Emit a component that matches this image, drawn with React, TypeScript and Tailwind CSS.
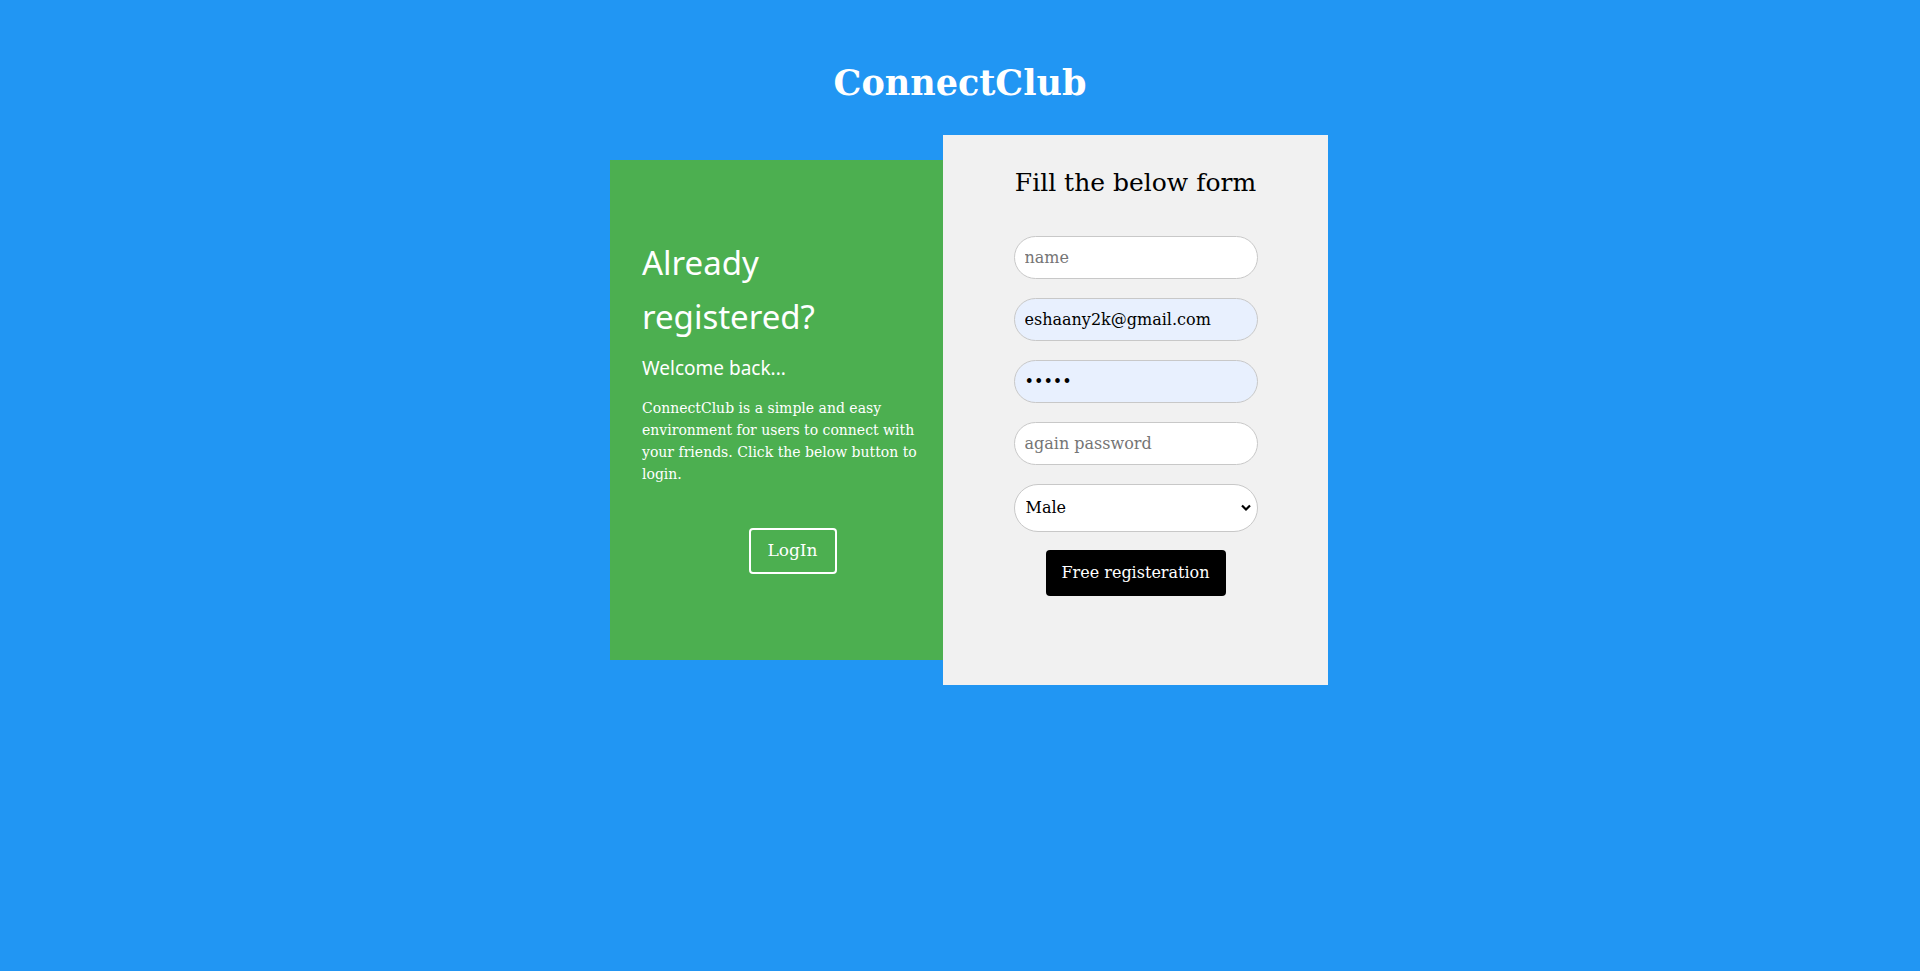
import { useState } from "react";

function Field({
  placeholder,
  type = "text",
  value,
  filled,
}: {
  placeholder: string;
  type?: string;
  value?: string;
  filled?: boolean;
}) {
  return (
    <input
      type={type}
      placeholder={placeholder}
      defaultValue={value}
      className={`w-[244px] h-[43px] rounded-full border border-[#c8c8c8] px-[10px] text-[16px] text-black placeholder:text-[#757575] outline-none font-['DejaVu_Serif',serif] ${
        filled ? "bg-[#e8f0fe]" : "bg-white"
      }`}
    />
  );
}

export default function App() {
  const [gender, setGender] = useState("Male");

  return (
    <div className="min-h-[971px] bg-[#2196f3] flex flex-col items-center font-['DejaVu_Serif',serif]">
      <h1 className="text-white text-[35px] font-bold mt-[58px] leading-[50px]">
        ConnectClub
      </h1>

      <div className="flex items-center mt-[27px] pl-[18px]">
        {/* left panel */}
        <div className="w-[333px] h-[500px] bg-[#4caf50] text-white pl-[32px] pt-[76px]">
          <h2 className="text-[33px] leading-[54px] font-normal font-['Noto_Sans','Open_Sans',sans-serif]">
            Already
            <br />
            registered?
          </h2>
          <p className="text-[19px] mt-[10px] leading-[28px] font-['Noto_Sans','Open_Sans',sans-serif]">
            Welcome back...
          </p>
          <p className="text-[14px] leading-[22px] mt-[15px] w-[290px]">
            ConnectClub is a simple and easy environment for users to connect
            with your friends. Click the below button to login.
          </p>
          <div className="flex justify-center mt-[43px]">
            <button className="w-[88px] h-[46px] border-2 border-white rounded-[4px] text-[17px] text-white">
              LogIn
            </button>
          </div>
        </div>

        {/* right panel */}
        <div className="w-[385px] h-[550px] bg-[#f1f1f1] flex flex-col items-center pt-[28px]">
          <h3 className="text-[25px] text-black leading-[40px]">
            Fill the below form
          </h3>
          <div className="flex flex-col items-center gap-[19px] mt-[33px]">
            <Field placeholder="name" />
            <Field placeholder="email" value="eshaany2k@gmail.com" filled />
            <Field placeholder="password" type="password" value="abcde" filled />
            <Field placeholder="again password" type="password" />
            <div className="relative">
              <select
                value={gender}
                onChange={(e) => setGender(e.target.value)}
                className="appearance-none w-[244px] h-[48px] rounded-full border border-[#c8c8c8] bg-white pl-[11px] text-[16px] text-black outline-none"
              >
                <option>Male</option>
                <option>Female</option>
                <option>Other</option>
              </select>
              <svg
                className="absolute right-[6px] top-[19px] pointer-events-none"
                width="12"
                height="10"
                viewBox="0 0 12 10"
              >
                <path d="M2 2.5 L6 6.5 L10 2.5" fill="none" stroke="black" strokeWidth="2.2" />
              </svg>
            </div>
          </div>
          <button className="mt-[18px] w-[180px] h-[46px] bg-black text-white rounded-[4px] text-[16px]">
            Free registeration
          </button>
        </div>
      </div>
    </div>
  );
}
